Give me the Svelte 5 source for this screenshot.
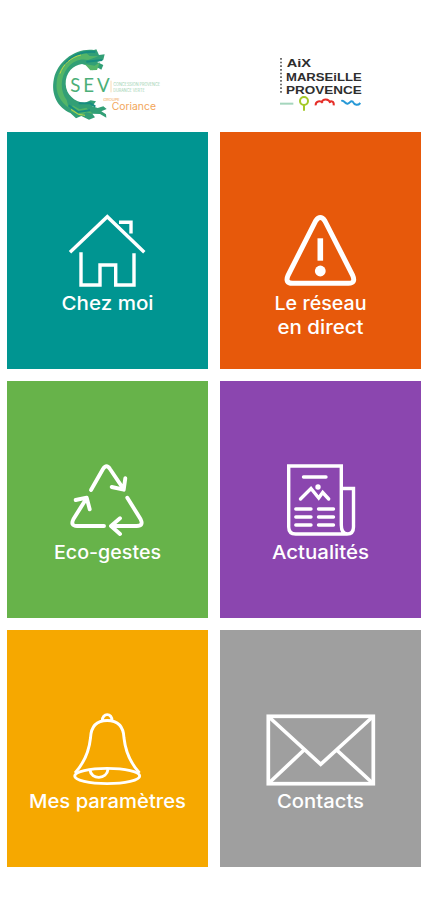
<script lang="ts">
  const tiles = [
    { icon: 'home', lines: ['Chez moi'], color: '#009591', width: 92 },
    { icon: 'alert', lines: ['Le réseau', 'en direct'], color: '#e7590b', width: 92 },
    { icon: 'recycle', lines: ['Eco-gestes'], color: '#67b34a', width: 107 },
    { icon: 'news', lines: ['Actualités'], color: '#8b46af', width: 97 },
    { icon: 'bell', lines: ['Mes paramètres'], color: '#f6a800', width: 157 },
    { icon: 'mail', lines: ['Contacts'], color: '#9f9f9f', width: 87 }
  ]
</script>

<div class="app">
  <header>
    <svg class="sev" viewBox="0 0 390 270" role="img" aria-label="SEV Coriance">
      <path fill="#329f76" d="M162 30 C108 22 53 64 42 115 C31 166 55 204 91 219 L108 235 L124 228 L147 239 L165 232 L157 221 L180 222 L199 233 L198 223 L184 214 L200 207 L190 199 L173 204 L157 199 L168 184 L152 181 L134 189 C102 185 78 163 77 132 C76 98 100 75 126 72 L148 79 L157 91 L171 82 L184 89 L190 75 L171 66 L190 59 L194 43 L177 45 L169 28 Z" />
      <path fill="#54b568" d="M139 39 C89 44 54 85 50 127 C46 160 62 187 86 203 L80 180 C60 153 60 112 83 83 C101 60 125 55 144 60 L175 49 L149 48 Z M98 196 L119 208 L139 203 L159 222 L139 217 L122 227 L92 213 Z M134 72 L164 77 L180 66 L171 90 L151 91 Z" />
      <path fill="none" stroke="#178d80" stroke-width="6" d="M166 36 C126 33 94 48 74 73 M86 196 L115 216 L150 211 M139 65 L187 60 M116 190 L151 190 L166 200" />
      <path fill="none" stroke="#bbd54b" stroke-width="3" d="M123 45 C93 51 68 75 60 101 M93 208 L115 223 L135 226" />
      <text class="sev-name" x="91" y="156" textLength="118">SEV</text>
      <text class="tag" x="220" y="137" textLength="140" lengthAdjust="spacingAndGlyphs">CONCESSION PROVENCE</text>
      <text class="tag" x="220" y="155" textLength="94" lengthAdjust="spacingAndGlyphs">DURANCE VERTE</text>
      <text class="group" x="190" y="183" textLength="49" lengthAdjust="spacingAndGlyphs">GROUPE</text>
      <text class="coriance" x="215" y="209" textLength="133" lengthAdjust="spacingAndGlyphs">Coriance</text>
      <path stroke="#f4c78f" stroke-width="2" d="M213 122 V157" />
    </svg>
    <svg class="amp" viewBox="0 0 300 225" role="img" aria-label="Aix Marseille Provence">
      <path stroke="#555" stroke-width="5" stroke-dasharray="5 6" d="M33 39 V145" />
      <text x="50" y="66" textLength="73" lengthAdjust="spacingAndGlyphs">AiX</text>
      <text x="48" y="107" textLength="227" lengthAdjust="spacingAndGlyphs">MARSEiLLE</text>
      <text x="48" y="146" textLength="227" lengthAdjust="spacingAndGlyphs">PROVENCE</text>
      <g fill="none" stroke-width="6">
        <path stroke="#a5d6bd" d="M30 176 H70" />
        <circle stroke="#a4c928" cx="102" cy="168" r="12" />
        <path stroke="#a4c928" d="M102 180 V197" />
        <path stroke="#e52e28" d="M137 181 C136 168 151 165 158 174 M155 172 C158 160 177 160 181 174 M177 172 C184 165 193 170 191 181" />
        <path stroke="#2799d7" d="M214 168 C223 164 225 178 233 176 C241 175 241 165 248 170 C254 182 264 182 271 174" />
      </g>
    </svg>
  </header>

  <main>
    {#each tiles as tile}
      <a class="tile {tile.icon}" href="#{tile.icon}" style="background-color: {tile.color}">
        <svg class="icon" viewBox="40 76 121 83" aria-hidden="true">
          {#if tile.icon === 'home'}
            <path d="M63 120.3 L100.3 84.7 L137.3 120.3 M112 90.3 H124 V101.5" />
            <path d="M74 120.3 V153 H93 V133 H108.7 V153 H127 V121.3" />
          {:else if tile.icon === 'alert'}
            <path d="M95.8 88.7 L68.2 143 Q64.5 151.3 72.5 151.3 H128.5 Q136.2 151.3 132.5 143 L104.8 88.7 Q100.3 82.5 95.8 88.7 Z" />
            <path class="bar" d="M100.3 106.3 V128.7" />
            <circle class="solid" cx="100.3" cy="139" r="5.4" />
          {:else if tile.icon === 'recycle'}
            <path d="M84 109 L96 88 Q99.5 82.5 103 88 L116.5 108 M104.7 106 L116.7 108.7 L118.3 97.3" />
            <path d="M120.3 116.7 L133.5 138 Q137 145 129.7 145 H104.5 M113 137.3 L104 145 L113 153" />
            <path d="M97 145 H70 Q63 145 66.5 138 L79.7 117 M68.7 119 L79.7 116.7 L82.7 128.3" />
          {:else if tile.icon === 'news'}
            <path d="M121.3 144 V85 H68.7 V146 Q68.7 153 75.7 153 H127 Q133.5 153 133.5 146 V107.5 H121.3 M121.3 144 Q121.3 153 127.5 153" />
            <path d="M83.5 96 H106 M80.5 118 L91 107.5 L98.7 117 L102.7 111.5 L108.7 118" />
            <path d="M75.8 128 H91 M98.5 128 H113.5 M75.8 136 H91 M98.5 136 H113.5 M75.8 144 H91 M98.5 144 H113.5" />
            <circle class="solid" cx="98" cy="106" r="2.7" />
          {:else if tile.icon === 'bell'}
            <path d="M95.3 91 C95 82.5 105.5 82.5 105 91" />
            <path d="M68 143 C77 133 82 122 83.5 108 C84 96 90 90.5 100.2 90.5 C110.5 90.5 116.5 96 117 108 C118.5 122 123.5 133 132.5 143" />
            <ellipse cx="100.2" cy="146" rx="32.5" ry="7.6" />
            <path d="M83 140 C84 150 100 150 101 139" />
          {:else}
            <rect x="48.3" y="86.3" width="105" height="67.4" />
            <path d="M49 87 L100.7 134.3 L152.5 87 M49 153 L84 120 M116.7 120 L152.5 153" />
          {/if}
        </svg>
        <svg class="label" width="201" height={tile.lines.length * 24}>
          {#each tile.lines as line, i}
            <text
              x="100.5"
              y={19 + i * 24}
              textLength={i === 1 ? 86 : tile.width}
              lengthAdjust="spacingAndGlyphs">{line}</text>
          {/each}
        </svg>
      </a>
    {/each}
  </main>
</div>

<style>
  :global(body) {
    background: #fff;
  }

  .app {
    width: 427px;
    height: 900px;
    overflow: hidden;
    font-family: Inter, "Open Sans", sans-serif;
  }

  header {
    display: flex;
    justify-content: space-between;
    box-sizing: border-box;
    height: 132px;
    padding: 40px 57px 0 40px;
  }

  .sev {
    width: 130px;
    height: 90px;
  }

  .amp {
    width: 100px;
    height: 75px;
    margin-top: 5px;
  }

  .sev-name {
    font: 400 56px Lato, sans-serif;
    fill: #4caf78;
  }

  .tag {
    font-size: 13px;
    fill: #9bd0ae;
  }

  .group {
    font-size: 10px;
    fill: #f0a04a;
  }

  .coriance {
    font-size: 29px;
    fill: #f2a65a;
  }

  .amp text {
    font: 700 33px "Liberation Sans", sans-serif;
    fill: #2e2e2e;
  }

  main {
    display: grid;
    grid-template-columns: 201px 201px;
    grid-auto-rows: 237px;
    gap: 12px;
    padding-left: 7px;
  }

  .tile {
    display: flex;
    flex-direction: column;
    align-items: center;
    box-sizing: border-box;
    padding-top: 76px;
    text-decoration: none;
  }

  .icon {
    width: 121px;
    height: 83px;
    flex: none;
    fill: none;
    stroke: #fff;
    stroke-width: 3.4;
  }

  .alert .icon {
    stroke-width: 5;
  }

  .alert .bar {
    stroke-width: 5.6;
  }

  .recycle .icon {
    stroke-width: 3.9;
    stroke-linecap: round;
    stroke-linejoin: round;
  }

  .news .icon {
    stroke-linecap: round;
  }

  .bell .icon {
    stroke-width: 2.9;
  }

  .mail .icon {
    stroke-width: 3.7;
  }

  .icon .solid {
    fill: #fff;
    stroke: none;
  }

  .label {
    flex: none;
    fill: #fff;
    font-size: 18.5px;
    font-weight: 500;
    text-anchor: middle;
  }
</style>
